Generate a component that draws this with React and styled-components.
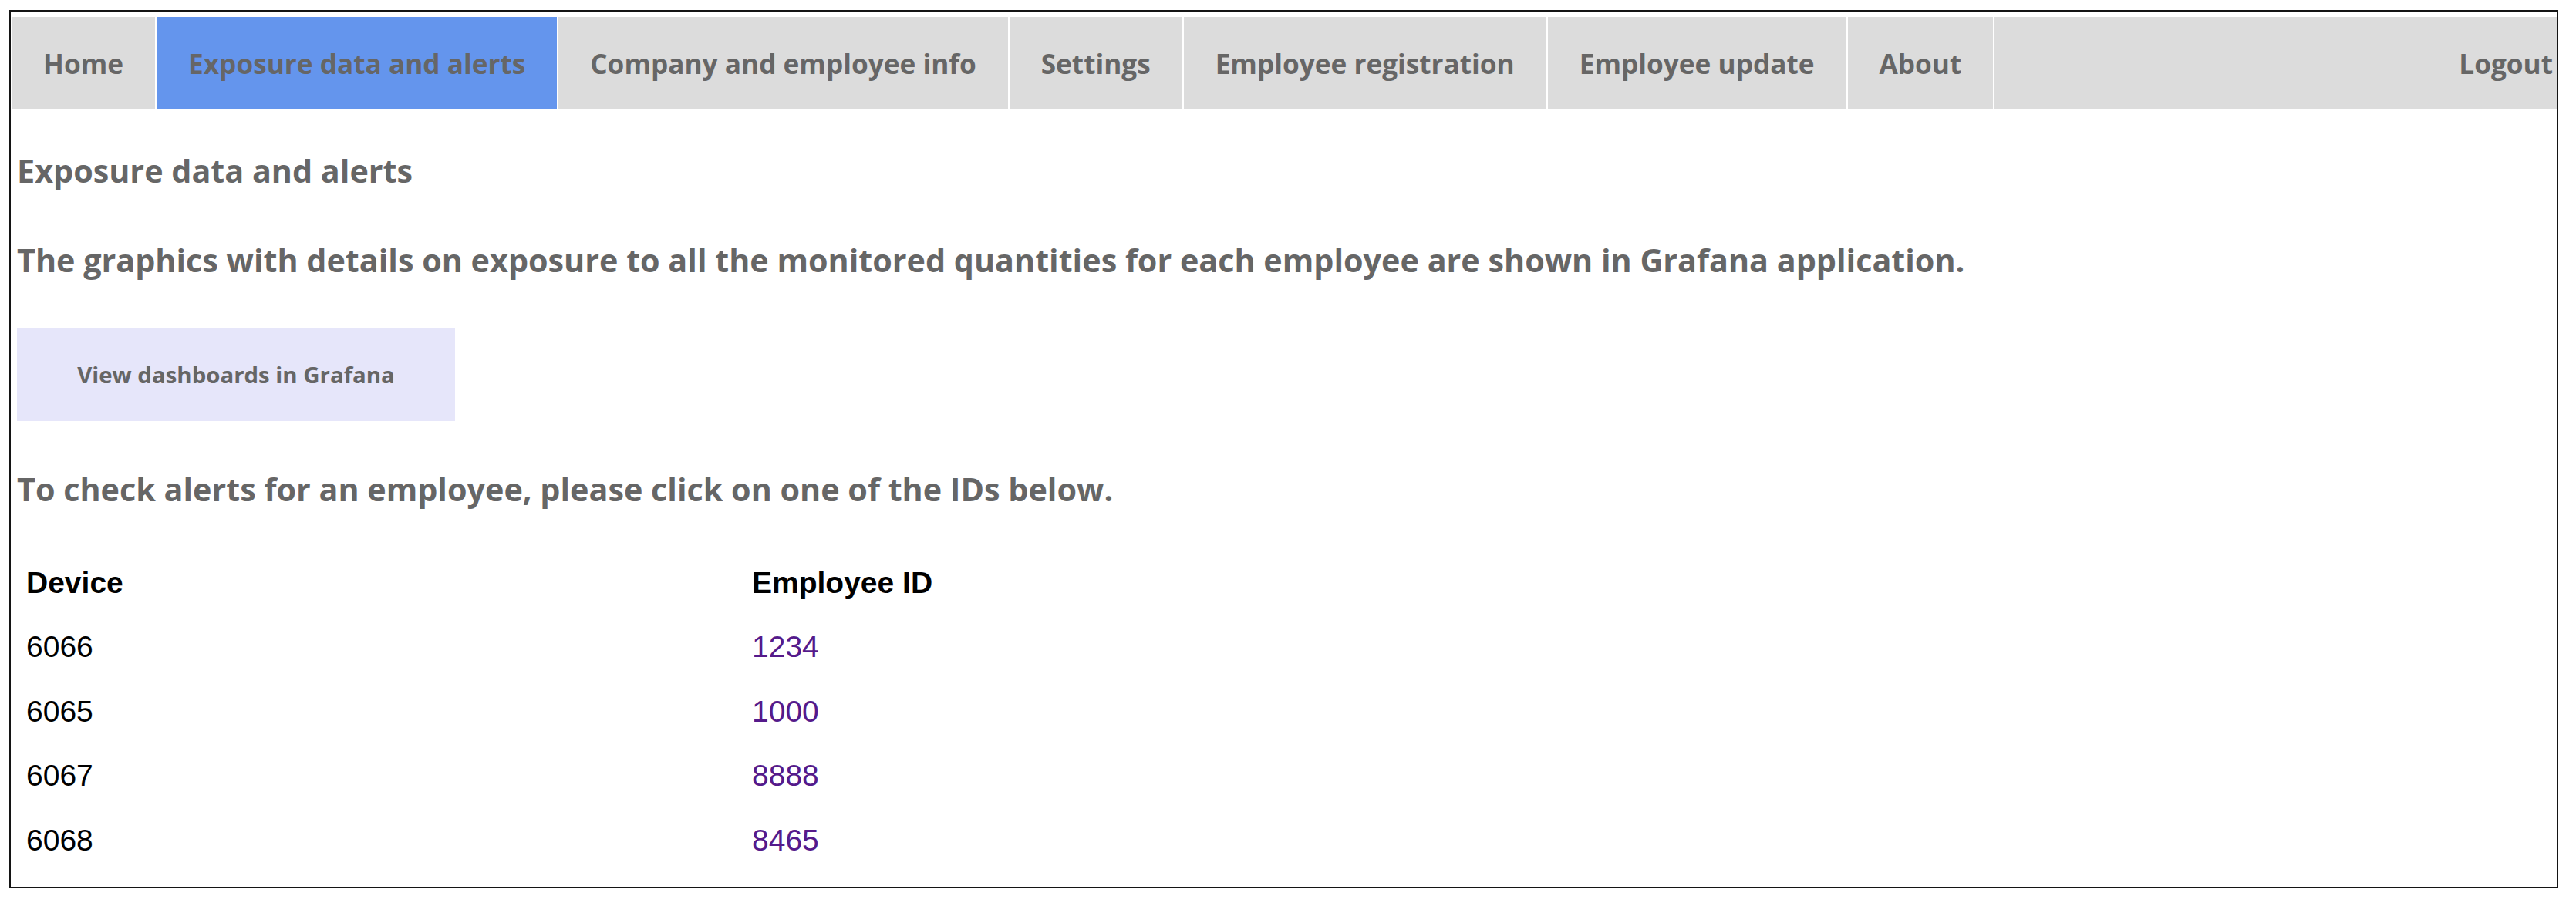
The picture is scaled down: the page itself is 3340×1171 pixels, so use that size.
import React from "react";
import styled, { createGlobalStyle } from "styled-components";

const Global = createGlobalStyle`
  html, body { margin: 0; padding: 0; background: #fff; }
  body { font-family: "Open Sans", "Liberation Sans", sans-serif; }
`;

const Frame = styled.div`
  box-sizing: border-box;
  margin: 13px 0 0 12px;
  width: 3305px;
  height: 1139px;
  border: 2px solid #141414;
  padding: 7px 0 0 1px;
`;

const Nav = styled.nav`
  display: flex;
  gap: 2px;
  height: 119px;
  background: #fff;
`;

const Tab = styled.a`
  display: flex;
  align-items: center;
  padding: 0 41px;
  background: ${(p) => (p.$active ? "#6495ed" : "#dcdcdc")};
  color: #666;
  font-family: "Open Sans", sans-serif;
  font-weight: 700;
  font-size: 35.2px;
  text-decoration: none;
  white-space: nowrap;
`;

const Filler = styled.div`
  flex: 1;
  display: flex;
  align-items: center;
  justify-content: flex-end;
  padding-right: 5px;
  background: #dcdcdc;
  color: #666;
  font-family: "Open Sans", sans-serif;
  font-weight: 700;
  font-size: 35.2px;
`;

const Content = styled.main`
  padding: 0 0 0 7px;
`;

const Heading = styled.h3`
  margin: ${(p) => p.$top}px 0 0 0;
  font-family: "Open Sans", sans-serif;
  font-weight: 700;
  font-size: 41.3px;
  line-height: 50px;
  color: #666;
`;

const Button = styled.button`
  display: flex;
  align-items: center;
  justify-content: center;
  margin-top: 63px;
  width: 568px;
  height: 121px;
  border: none;
  background: #e6e6fa;
  color: #666;
  font-family: "Open Sans", sans-serif;
  font-weight: 700;
  font-size: 29.4px;
  cursor: pointer;
`;

const Table = styled.div`
  display: grid;
  grid-template-columns: 941px auto;
  grid-auto-rows: 83.5px;
  margin-top: 55px;
  width: 1400px;
`;

const Cell = styled.div`
  display: flex;
  align-items: center;
  padding-left: 12px;
  font-family: "Liberation Sans", Arial, sans-serif;
  font-size: 39px;
  font-weight: ${(p) => (p.$head ? 700 : 400)};
  color: #000;
`;

const IdLink = styled.a`
  color: #551a8b;
  text-decoration: none;
`;

const tabs = [
  "Home",
  "Exposure data and alerts",
  "Company and employee info",
  "Settings",
  "Employee registration",
  "Employee update",
  "About",
];

const rows = [
  ["6066", "1234"],
  ["6065", "1000"],
  ["6067", "8888"],
  ["6068", "8465"],
];

export default function App() {
  return (
    <>
      <Global />
      <Frame>
        <Nav>
          {tabs.map((t) => (
            <Tab key={t} href="#" $active={t === "Exposure data and alerts"}>
              {t}
            </Tab>
          ))}
          <Filler>Logout</Filler>
        </Nav>
        <Content>
          <Heading $top={55}>Exposure data and alerts</Heading>
          <Heading $top={66}>
            The graphics with details on exposure to all the monitored quantities for each employee are shown in Grafana application.
          </Heading>
          <Button>View dashboards in Grafana</Button>
          <Heading $top={63}>
            To check alerts for an employee, please click on one of the IDs below.
          </Heading>
          <Table>
            <Cell $head>Device</Cell>
            <Cell $head>Employee ID</Cell>
            {rows.map(([d, id]) => (
              <React.Fragment key={d}>
                <Cell>{d}</Cell>
                <Cell>
                  <IdLink href="#">{id}</IdLink>
                </Cell>
              </React.Fragment>
            ))}
          </Table>
        </Content>
      </Frame>
    </>
  );
}
